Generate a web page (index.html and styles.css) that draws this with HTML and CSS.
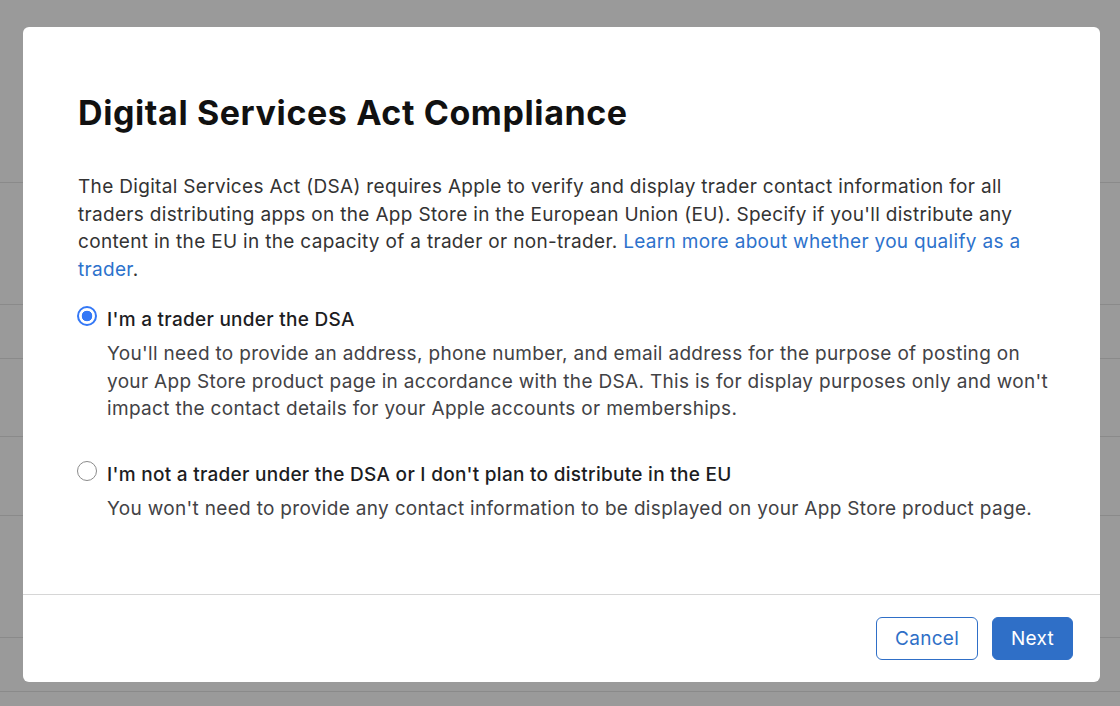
FILE: index.html
```html
<!DOCTYPE html>
<html lang="en">

<head>
    <meta charset="UTF-8">
    <meta name="viewport" content="width=device-width, initial-scale=1.0">
    <title>Digital Services Act Compliance</title>
    <link rel="stylesheet" href="styles.css">
</head>

<body>

    <!-- dimmed page behind the modal -->
    <div class="backdrop">
        <div class="row row-a"></div>
        <div class="row row-b"></div>
        <div class="row row-c"></div>
        <div class="row row-d"></div>
        <div class="row row-e"></div>
        <div class="row row-b"></div>
        <div class="row row-c"></div>
    </div>

    <div class="modal">
        <div class="modal-body">
            <h2>Digital Services Act Compliance</h2>
            <p class="intro">
                The Digital Services Act (DSA) requires Apple to verify and display trader contact information for all
                traders distributing apps on the App Store in the European Union (EU). Specify if you'll distribute any
                content in the EU in the capacity of a trader or non-trader.
                <a href="#">Learn more about whether you qualify as a trader</a>.
            </p>

            <label class="option">
                <input type="radio" name="trader" checked>
                <span class="option-text">
                    <span class="option-title">I'm a trader under the DSA</span>
                    <span class="option-desc">You'll need to provide an address, phone number, and email address for the
                        purpose of posting on your App Store product page in accordance with the DSA. This is for display
                        purposes only and won't impact the contact details for your Apple accounts or memberships.</span>
                </span>
            </label>

            <label class="option">
                <input type="radio" name="trader">
                <span class="option-text">
                    <span class="option-title">I'm not a trader under the DSA or I don't plan to distribute in the EU</span>
                    <span class="option-desc">You won't need to provide any contact information to be displayed on your
                        App Store product page.</span>
                </span>
            </label>
        </div>

        <div class="modal-footer">
            <button type="button" class="btn btn-secondary">Cancel</button>
            <button type="button" class="btn btn-primary">Next</button>
        </div>
    </div>

</body>

</html>
```

FILE: styles.css
```css
body {
    font-family: Inter, "Noto Sans", sans-serif;
    background-color: #9a9a9a;
    margin: 0;
    padding: 0;
    height: 706px;
    overflow: hidden;
    color: #1d1d1f;
}

.backdrop {
    display: flex;
    flex-direction: column;
}

.row {
    border-bottom: 1px solid #8a8a8a;
}

.row-a { height: 182px; }
.row-b { height: 121px; }
.row-c { height: 53px; }
.row-d { height: 77px; }
.row-e { height: 78px; }

.modal {
    position: absolute;
    top: 27px;
    left: 23px;
    width: 1077px;
    height: 655px;
    background-color: #fff;
    border-radius: 6px;
    display: flex;
    flex-direction: column;
    box-sizing: border-box;
}

.modal-body {
    flex: 1;
    padding: 64px 50px 0 55px;
}

h2 {
    margin: 0 0 38px 0;
    font-size: 34px;
    line-height: 44px;
    font-weight: 700;
    letter-spacing: 0.6px;
    color: #111;
}

.intro {
    margin: 0 0 24px 0;
    font-size: 19px;
    line-height: 27.5px;
    letter-spacing: 0.32px;
    color: #333;
}

.intro a {
    color: #2d72cc;
    text-decoration: none;
}

.option {
    display: flex;
    align-items: flex-start;
    gap: 10px;
    margin-bottom: 39px;
    cursor: pointer;
}

.option input[type="radio"] {
    appearance: none;
    -webkit-appearance: none;
    flex: none;
    width: 20px;
    height: 20px;
    margin: -1px 0 0 -1px;
    border: 1.5px solid #8b8b8b;
    border-radius: 50%;
    box-sizing: border-box;
    background-color: #fff;
}

.option input[type="radio"]:checked {
    border: 2px solid #3478f6;
    background: radial-gradient(circle, #3478f6 0 5px, #fff 5.6px);
}

.option-text {
    display: flex;
    flex-direction: column;
    gap: 7px;
}

.option-title {
    font-size: 19px;
    line-height: 26px;
    font-weight: 500;
    letter-spacing: 0.28px;
    color: #1d1d1f;
}

.option-desc {
    font-size: 19px;
    line-height: 27.5px;
    letter-spacing: 0.32px;
    color: #424245;
}

.modal-footer {
    border-top: 1px solid #d6d6d6;
    height: 87px;
    padding: 0 27px;
    display: flex;
    justify-content: flex-end;
    align-items: center;
    gap: 14px;
}

.btn {
    height: 43px;
    padding: 0 18px;
    font-family: inherit;
    font-size: 19px;
    letter-spacing: 0.3px;
    border-radius: 6px;
    cursor: pointer;
}

.btn-secondary {
    background-color: #fff;
    color: #2f6fc7;
    border: 1px solid #2f6fc7;
    width: 102px;
}

.btn-primary {
    background-color: #2f6fc7;
    color: #fff;
    border: 1px solid #2f6fc7;
    width: 81px;
}

.btn-primary:hover {
    background-color: #275fae;
}
```
